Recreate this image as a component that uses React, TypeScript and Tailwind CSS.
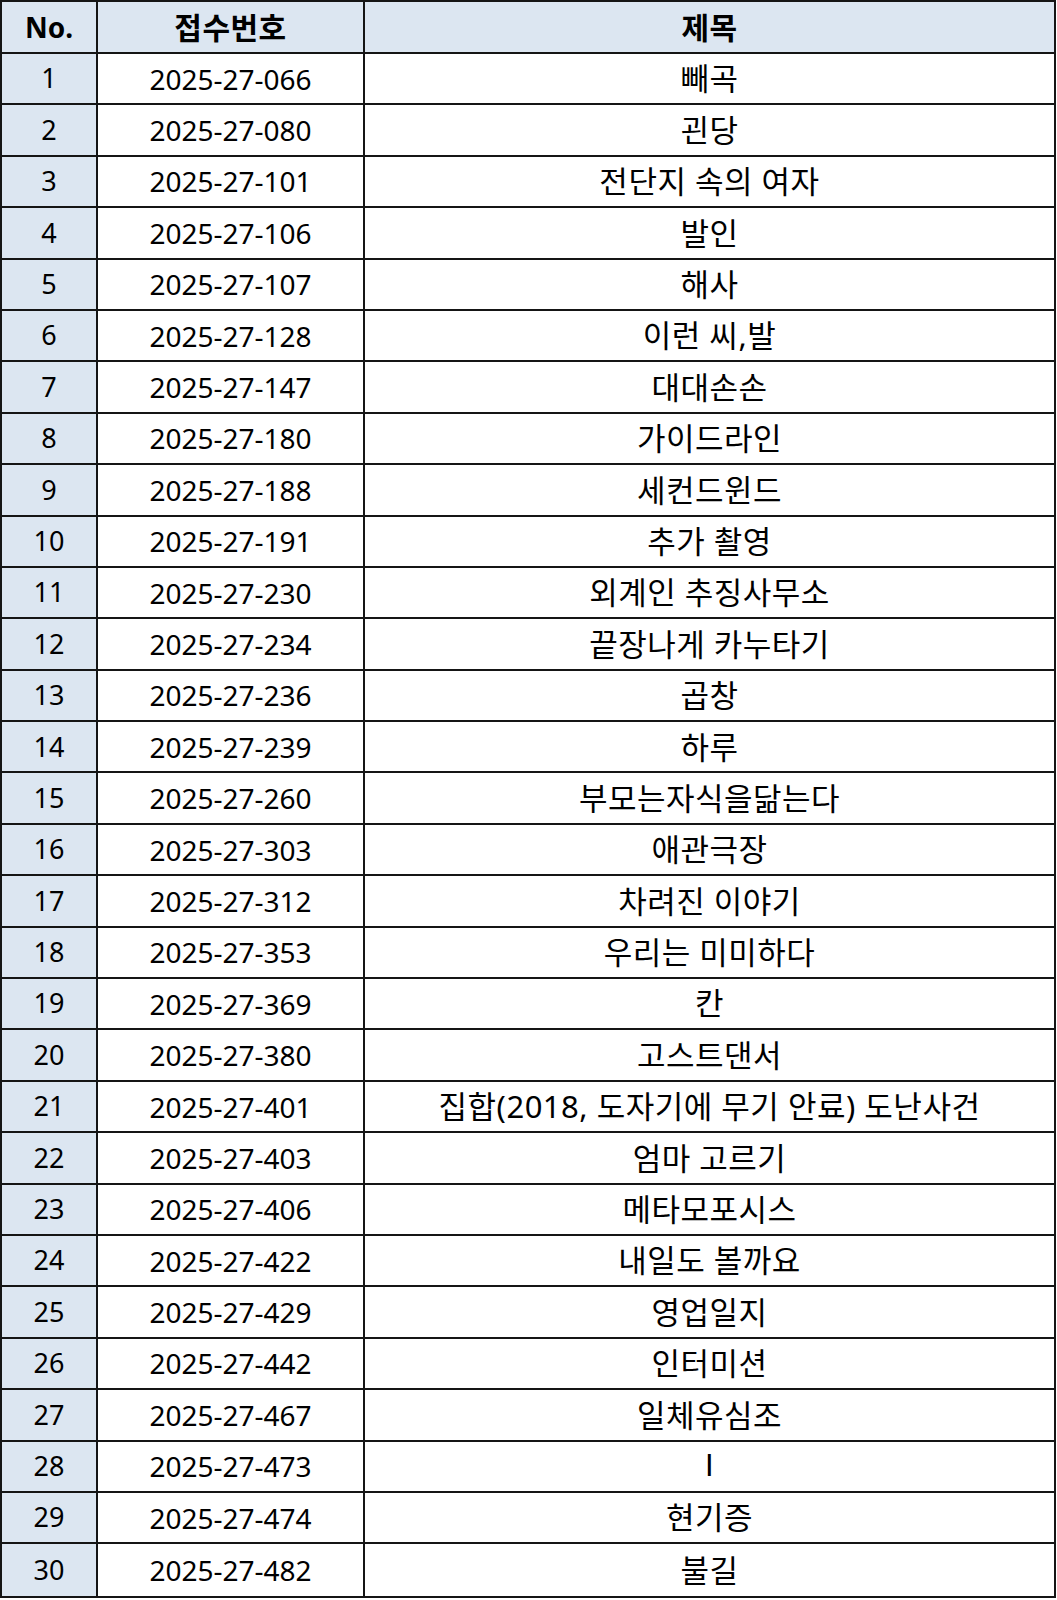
import React from "react";

const rows: [string, string][] = [
  ["2025-27-066", "빼곡"],
  ["2025-27-080", "괸당"],
  ["2025-27-101", "전단지 속의 여자"],
  ["2025-27-106", "발인"],
  ["2025-27-107", "해사"],
  ["2025-27-128", "이런 씨,발"],
  ["2025-27-147", "대대손손"],
  ["2025-27-180", "가이드라인"],
  ["2025-27-188", "세컨드윈드"],
  ["2025-27-191", "추가 촬영"],
  ["2025-27-230", "외계인 추징사무소"],
  ["2025-27-234", "끝장나게 카누타기"],
  ["2025-27-236", "곱창"],
  ["2025-27-239", "하루"],
  ["2025-27-260", "부모는자식을닮는다"],
  ["2025-27-303", "애관극장"],
  ["2025-27-312", "차려진 이야기"],
  ["2025-27-353", "우리는 미미하다"],
  ["2025-27-369", "칸"],
  ["2025-27-380", "고스트댄서"],
  ["2025-27-401", "집합(2018, 도자기에 무기 안료) 도난사건"],
  ["2025-27-403", "엄마 고르기"],
  ["2025-27-406", "메타모포시스"],
  ["2025-27-422", "내일도 볼까요"],
  ["2025-27-429", "영업일지"],
  ["2025-27-442", "인터미션"],
  ["2025-27-467", "일체유심조"],
  ["2025-27-473", "I"],
  ["2025-27-474", "현기증"],
  ["2025-27-482", "불길"],
];

const font = { fontFamily: '"Noto Sans", "Noto Sans CJK KR", sans-serif' };

export default function App() {
  return (
    <div className="bg-white w-[1057px] h-[1600px]" style={font}>
      <div className="w-[1056px] border-2 border-[#151515] text-black">
        <div className="grid grid-cols-[96px_267px_1fr] h-[52px] border-b-2 border-[#151515] bg-[#dce6f1] font-bold">
          <div className="flex items-center justify-center border-r-2 border-[#151515] text-[28px]">No.</div>
          <div className="flex items-center justify-center border-r-2 border-[#151515] text-[30px] tracking-[0.5px]">접수번호</div>
          <div className="flex items-center justify-center text-[30px] tracking-[0.5px]">제목</div>
        </div>
        {rows.map(([code, title], i) => (
          <div
            key={code}
            className={
              "grid grid-cols-[96px_267px_1fr] h-[51.4px] " +
              (i < rows.length - 1 ? "border-b-2 border-[#151515]" : "")
            }
          >
            <div className="flex items-center justify-center border-r-2 border-[#151515] bg-[#dce6f1] text-[27px]">
              {i + 1}
            </div>
            <div className="flex items-center justify-center border-r-2 border-[#151515] bg-white text-[28px]">
              {code}
            </div>
            <div
              className={
                "flex items-center justify-center bg-white text-[31px] tracking-[0.5px] " +
                (title === "I" ? "font-['Liberation_Sans']" : "")
              }
            >
              {title}
            </div>
          </div>
        ))}
      </div>
    </div>
  );
}
